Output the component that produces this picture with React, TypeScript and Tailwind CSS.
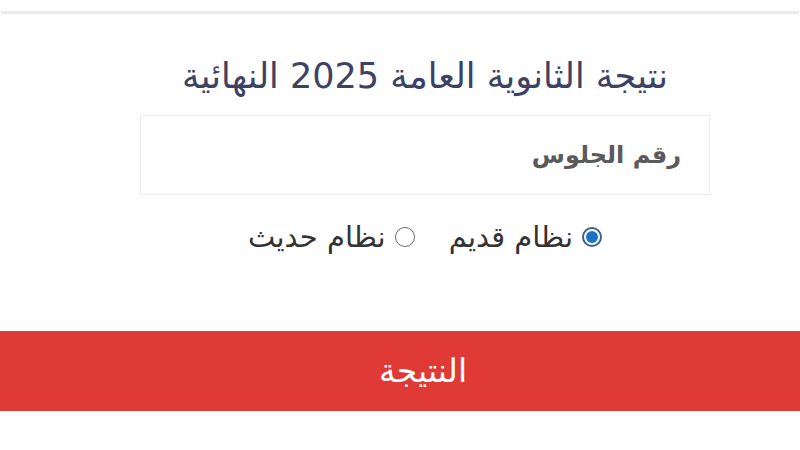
export default function App() {
  return (
    <div
      dir="rtl"
      className="w-[800px] h-[450px] bg-white overflow-hidden"
      style={{ fontFamily: '"DejaVu Sans", "Noto Sans", sans-serif' }}
    >
      {/* top divider */}
      <div className="pt-[11px]">
        <div className="h-[3px] bg-[#ebebeb] mx-[1px]" />
      </div>

      {/* form */}
      <div className="w-[570px] ml-[140px] mr-auto flex flex-col items-center pt-[42px]">
        <h1 className="text-[35px] leading-[40px] text-[#3d4163] font-normal whitespace-nowrap">
          نتيجة الثانوية العامة 2025 النهائية
        </h1>
        <div className="w-full h-[80px] mt-[19px] border border-[#ececec] flex items-center px-[28px]">
          <span className="text-[24px] font-bold text-[#5a5a5a]">رقم الجلوس</span>
        </div>
        <div className="flex items-center gap-[34px] mt-[25px] text-[29px] leading-[34px] text-[#333]">
          <label className="flex items-center gap-[9px]">
            <span className="w-[20px] h-[20px] rounded-full border-2 border-[#3b6189] flex items-center justify-center bg-white">
              <span className="w-[12px] h-[12px] rounded-full bg-[#1a73c8]" />
            </span>
            <span>نظام قديم</span>
          </label>
          <label className="flex items-center gap-[9px]">
            <span className="w-[20px] h-[20px] rounded-full border-[1.5px] border-[#6b6b6b] bg-white" />
            <span>نظام حديث</span>
          </label>
        </div>
      </div>

      {/* submit */}
      <div className="mt-[77px] h-[80px] bg-[#e03a36] flex items-center justify-center pl-[46px]">
        <span className="text-[33px] text-white">النتيجة</span>
      </div>
    </div>
  );
}
